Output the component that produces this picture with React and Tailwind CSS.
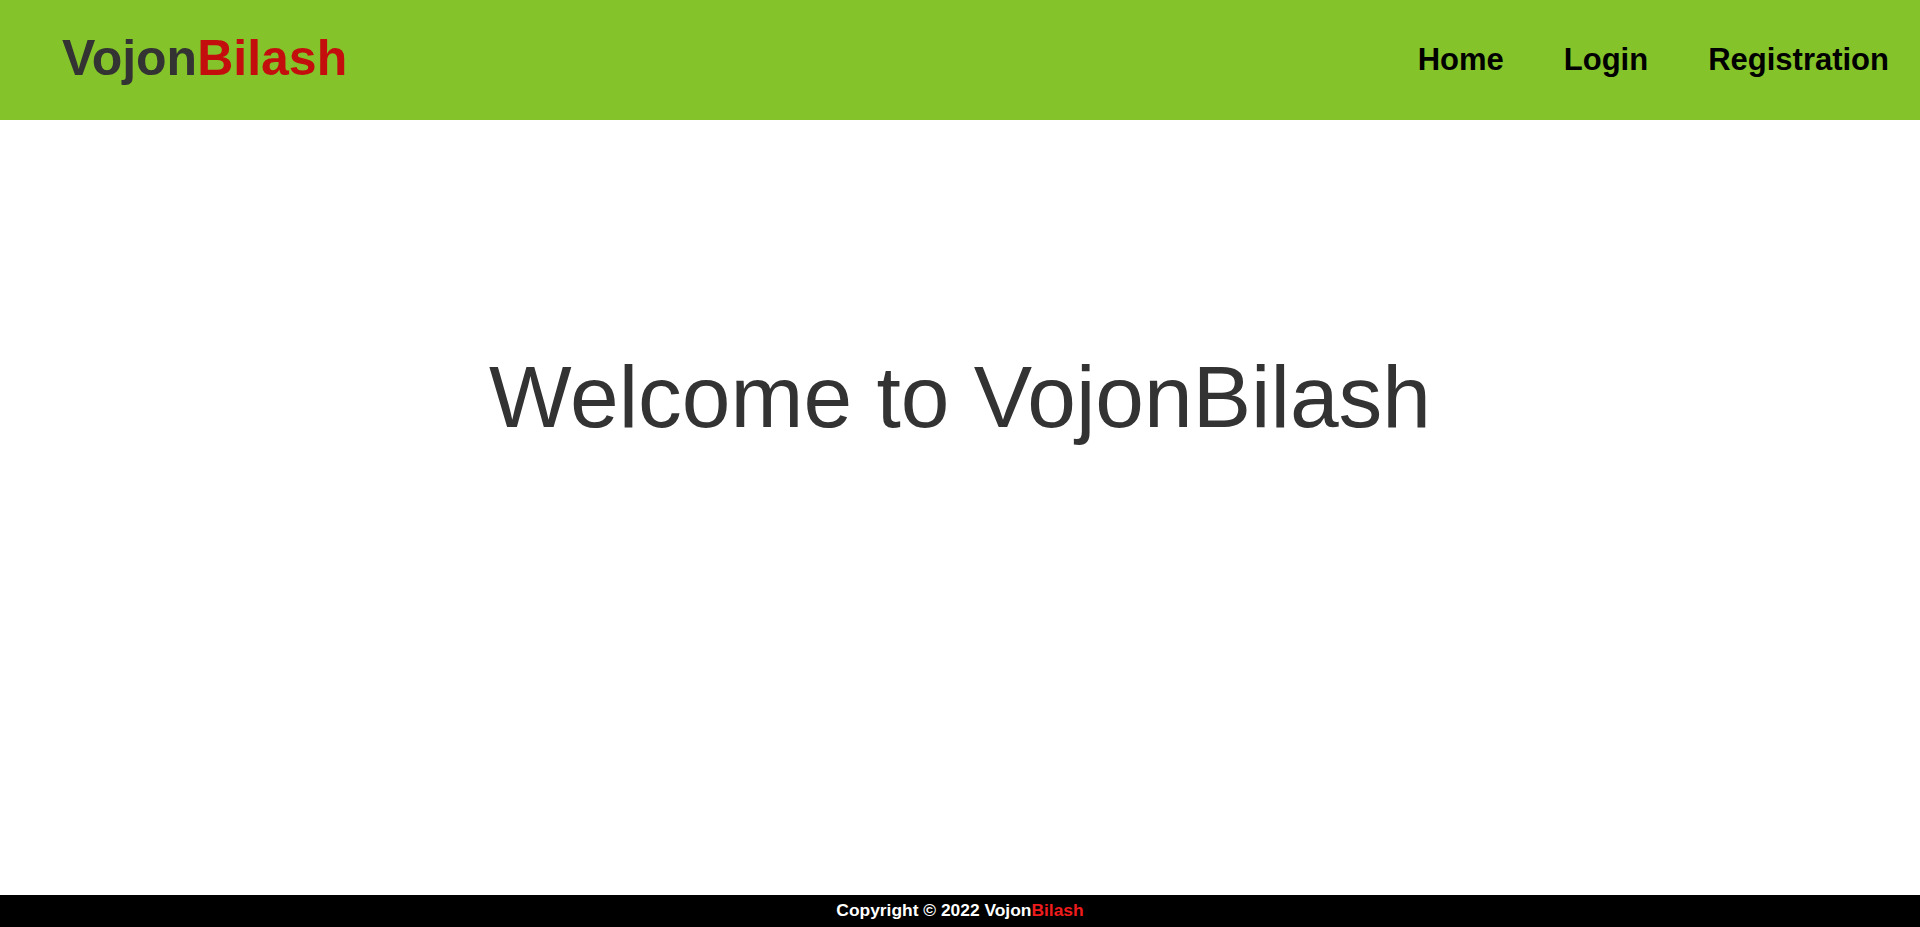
const navLinks = ["Home", "Login", "Registration"];

const Header = () => {
  return (
    <header className="h-[120px] bg-[#84c42a] flex items-center justify-between pl-[62px] pr-[31px]">
      <a href="#" className="text-[50px] font-bold leading-[1.15] mb-[2px]">
        <span className="text-[#333333]">Vojon</span>
        <span className="text-[#c40e0e]">Bilash</span>
      </a>
      <nav className="flex items-center gap-[60px]">
        {navLinks.map((link) => (
          <a key={link} href="#" className="text-[31px] font-bold text-black leading-[1.15]">
            {link}
          </a>
        ))}
      </nav>
    </header>
  );
};

const Footer = () => {
  return (
    <footer className="h-[32px] bg-black flex items-center justify-center">
      <p className="text-[17.4px] font-bold text-white leading-none">
        Copyright © 2022 Vojon<span className="text-[#ee1c1c]">Bilash</span>
      </p>
    </footer>
  );
};

export default function App() {
  return (
    <div className="min-h-screen flex flex-col bg-white font-['Liberation_Sans',Arial,sans-serif]">
      <Header />
      <main className="flex-1 flex justify-center pt-[227px]">
        <h1 className="text-[87.5px] font-normal leading-[1.15] text-[#333333]">
          Welcome to VojonBilash
        </h1>
      </main>
      <Footer />
    </div>
  );
}
